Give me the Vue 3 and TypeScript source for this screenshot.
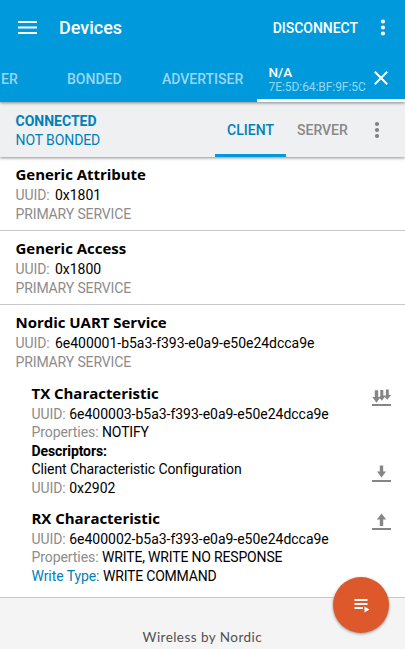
<script setup lang="ts">
type IconKind = 'notify' | 'read' | 'write'

interface Line {
  label?: string
  value?: string
  tone?: 'link' | 'bold' | 'caps' | 'prose'
  icon?: IconKind
}

interface Characteristic {
  name: string
  icon?: IconKind
  lines: Line[]
}

interface Service {
  name: string
  uuid: string
  characteristics: Characteristic[]
}

const services: Service[] = [
  { name: 'Generic Attribute', uuid: '0x1801', characteristics: [] },
  { name: 'Generic Access', uuid: '0x1800', characteristics: [] },
  {
    name: 'Nordic UART Service',
    uuid: '6e400001-b5a3-f393-e0a9-e50e24dcca9e',
    characteristics: [
      {
        name: 'TX Characteristic',
        icon: 'notify',
        lines: [
          { label: 'UUID:', value: '6e400003-b5a3-f393-e0a9-e50e24dcca9e' },
          { label: 'Properties:', value: 'NOTIFY', tone: 'caps' },
          { value: 'Descriptors:', tone: 'bold' },
          { value: 'Client Characteristic Configuration', tone: 'prose', icon: 'read' },
          { label: 'UUID:', value: '0x2902' },
        ],
      },
      {
        name: 'RX Characteristic',
        icon: 'write',
        lines: [
          { label: 'UUID:', value: '6e400002-b5a3-f393-e0a9-e50e24dcca9e' },
          { label: 'Properties:', value: 'WRITE, WRITE NO RESPONSE', tone: 'caps' },
          { label: 'Write Type:', value: 'WRITE COMMAND', tone: 'link' },
        ],
      },
    ],
  },
]

const iconPaths: Record<IconKind, string> = {
  notify:
    'M2.8 1.3H6.2V8H8.6L4.5 13.7L0.3 8H2.8Z M8.3 1H11.3V6.5H13.6L10 11.8L7 8.2L8.3 7Z M13.9 0.4H16.8V6H19L15.3 10.8L12.6 8L13.9 6.5Z M0 15H19V17H0Z',
  read: 'M7.8 0.5H11.2V6.5H14L9.5 12.5L5 6.5H7.8Z M0 15H19V17H0Z',
  write: 'M9.5 0.5L14.2 6.5H11.2V13H7.8V6.5H4.8Z M0 15H19V17H0Z',
}
</script>

<template>
  <div class="screen">
    <header class="appbar">
      <div class="toolbar">
        <svg class="menu" width="19" height="14" viewBox="0 0 19 14">
          <path d="M0 0h19v2H0zM0 5.5h19v2H0zM0 11h19v2H0z" />
        </svg>
        <h1>Devices</h1>
        <span class="disconnect">DISCONNECT</span>
        <svg class="dots" width="6" height="18" viewBox="0 0 6 18">
          <circle cx="3" cy="2.5" r="2.1" /><circle cx="3" cy="8.5" r="2.1" /><circle cx="3" cy="14.5" r="2.1" />
        </svg>
      </div>
      <nav class="tabs">
        <span class="tab scanner">ER</span>
        <span class="tab bonded">BONDED</span>
        <span class="tab advertiser">ADVERTISER</span>
        <div class="tab-device">
          <div class="device">
            <span class="device-name">N/A</span>
            <span class="device-mac">7E:5D:64:BF:9F:5C</span>
          </div>
          <svg class="close" width="14" height="14" viewBox="0 0 14 14">
            <path d="M0.8 0.8L13.2 13.2M13.2 0.8L0.8 13.2" fill="none" stroke="#fff" stroke-width="2" />
          </svg>
        </div>
      </nav>
    </header>

    <section class="status">
      <div class="state">
        <b>CONNECTED</b>
        <span class="bond">NOT BONDED</span>
      </div>
      <span class="role active">CLIENT</span>
      <span class="role server">SERVER</span>
      <svg class="dots grey" width="6" height="18" viewBox="0 0 6 18">
        <circle cx="3" cy="3" r="2.1" /><circle cx="3" cy="9" r="2.1" /><circle cx="3" cy="15" r="2.1" />
      </svg>
    </section>

    <main>
      <section v-for="s in services" :key="s.name" class="service">
        <h2>{{ s.name }}</h2>
        <p class="line wide"><span class="label">UUID:</span><span>{{ s.uuid }}</span></p>
        <p class="line kind">PRIMARY SERVICE</p>
        <article v-for="c in s.characteristics" :key="c.name" class="characteristic">
          <h2 class="row">
            <span>{{ c.name }}</span>
            <svg v-if="c.icon" class="action" :class="c.icon" width="19" height="17" viewBox="0 0 19 17">
              <path :d="iconPaths[c.icon]" />
            </svg>
          </h2>
          <p v-for="(l, i) in c.lines" :key="i" class="line" :class="l.tone">
            <span v-if="l.label" class="label">{{ l.label }}</span>
            <span class="value">{{ l.value }}</span>
            <svg v-if="l.icon" class="action" width="19" height="17" viewBox="0 0 19 17">
              <path :d="iconPaths[l.icon]" />
            </svg>
          </p>
        </article>
      </section>
    </main>

    <footer>Wireless by Nordic</footer>

    <button class="fab" aria-label="Macros">
      <svg width="16" height="14" viewBox="0 0 16 14">
        <path d="M0.5 0h13v2H0.5zM0.5 4h13v2H0.5zM0.5 8h8.5v2H0.5zM10.5 7.5L15.5 10.5L10.5 13.5z" />
      </svg>
    </button>
  </div>
</template>

<style>
body {
  margin: 0;
}
</style>

<style scoped>
.screen {
  position: relative;
  width: 405px;
  height: 649px;
  overflow: hidden;
  display: flex;
  flex-direction: column;
  background: #fff;
  font-family: Roboto, 'Liberation Sans', sans-serif;
  font-size: 14px;
  color: #000;
}
h1, h2, p {
  margin: 0;
}
.appbar {
  position: relative;
  z-index: 2;
  flex: none;
  height: 102px;
  background: #009adc;
  color: #fff;
  box-shadow: 0 1px 3px rgba(0, 0, 0, 0.45);
}
.toolbar {
  display: flex;
  align-items: center;
  height: 55px;
  padding: 0 15px 0 18px;
  box-sizing: border-box;
}
.menu, .dots {
  flex: none;
  fill: #fff;
}
h1 {
  margin-left: 22px;
  font-size: 18px;
  font-weight: 500;
}
.disconnect {
  margin-left: auto;
  margin-right: 22px;
  font-weight: 500;
  letter-spacing: -0.03px;
}
.dots {
  margin-right: 4px;
}
.tabs {
  display: flex;
  height: 47px;
}
.tab {
  line-height: 48px;
  font-weight: 500;
  color: #99d7f1;
}
.scanner {
  width: 67px;
  text-indent: 1px;
}
.bonded {
  width: 95px;
}
.advertiser {
  width: 95px;
}
.tab-device {
  flex: 1;
  display: flex;
  align-items: center;
  justify-content: space-between;
  box-sizing: border-box;
  padding: 0 17px 0 11.5px;
  border-bottom: 3px solid #fff;
}
.device {
  display: flex;
  flex-direction: column;
  padding-top: 4px;
}
.device-name {
  line-height: 15px;
  font-weight: 500;
  font-size: 13.5px;
}
.device-mac {
  line-height: 14px;
  font-size: 12px;
  letter-spacing: -0.06px;
  color: #99d7f1;
}
.close {
  margin-top: 2px;
}
.status {
  position: relative;
  z-index: 1;
  flex: none;
  display: flex;
  align-items: stretch;
  height: 55px;
  background: #eef0f2;
  box-shadow: 0 1px 3px rgba(0, 0, 0, 0.45);
}
.state {
  display: flex;
  flex-direction: column;
  width: 199.5px;
  padding: 10px 0 0 15.5px;
  line-height: 18.5px;
  color: #0080b7;
}
.bond {
  letter-spacing: -0.1px;
}
.role {
  box-sizing: border-box;
  line-height: 56px;
  font-weight: 500;
  color: #888;
}
.active {
  width: 71px;
  height: 55px;
  text-align: center;
  color: #0080b7;
  border-bottom: 3px solid #009adc;
}
.server {
  padding-left: 11px;
}
.grey {
  align-self: center;
  margin-left: auto;
  margin-right: 25px;
  fill: #808080;
}
main {
  flex: none;
}
.service {
  min-height: 74px;
  box-sizing: border-box;
  padding: 7px 0 0 15.5px;
  border-bottom: 1px solid #c8c8c8;
}
.service:last-child {
  padding-bottom: 11px;
}
h2 {
  font-family: 'Open Sans', 'Noto Sans', sans-serif;
  font-size: 15px;
  font-weight: 700;
  line-height: 20px;
  letter-spacing: -0.03px;
}
.line {
  display: flex;
  line-height: 18.6px;
  white-space: nowrap;
  letter-spacing: -0.02px;
}
.label {
  margin-right: 3.6px;
  color: #8c8c8c;
  letter-spacing: -0.08px;
}
.wide .label {
  margin-right: 5.3px;
}
.wide {
  padding-top: 2px;
}
.kind {
  color: #8c8c8c;
  letter-spacing: -0.13px;
}
.caps .value {
  letter-spacing: -0.17px;
}
.link .value {
  letter-spacing: -0.2px;
}
.prose {
  letter-spacing: -0.1px;
}
.link .label {
  color: #0080b7;
}
.bold {
  font-weight: 700;
  letter-spacing: -0.1px;
}
.characteristic {
  padding: 10.8px 14px 0 16px;
}
.characteristic:nth-of-type(1) {
  padding-top: 12px;
}
.row {
  display: flex;
  padding-bottom: 1.4px;
}
.action {
  flex: none;
  margin-left: auto;
  margin-top: 5px;
  margin-bottom: -8px;
  fill: #868686;
}
.notify {
  margin-top: 5.8px;
}
footer {
  flex: 1;
  box-sizing: border-box;
  padding: 30px 0 0 142.5px;
  line-height: 18px;
  background: #f4f4f4;
  color: #505050;
  font-family: Lato, sans-serif;
  font-size: 13.5px;
  letter-spacing: 0.45px;
}
.fab {
  position: absolute;
  left: 333px;
  top: 577px;
  width: 56px;
  height: 56px;
  display: flex;
  align-items: center;
  justify-content: center;
  padding: 1px 0 0 1px;
  border: 0;
  border-radius: 50%;
  background: #dd582b;
  box-shadow: 0 1px 3px rgba(0, 0, 0, 0.4);
}
.fab svg {
  fill: #fff;
}
</style>
